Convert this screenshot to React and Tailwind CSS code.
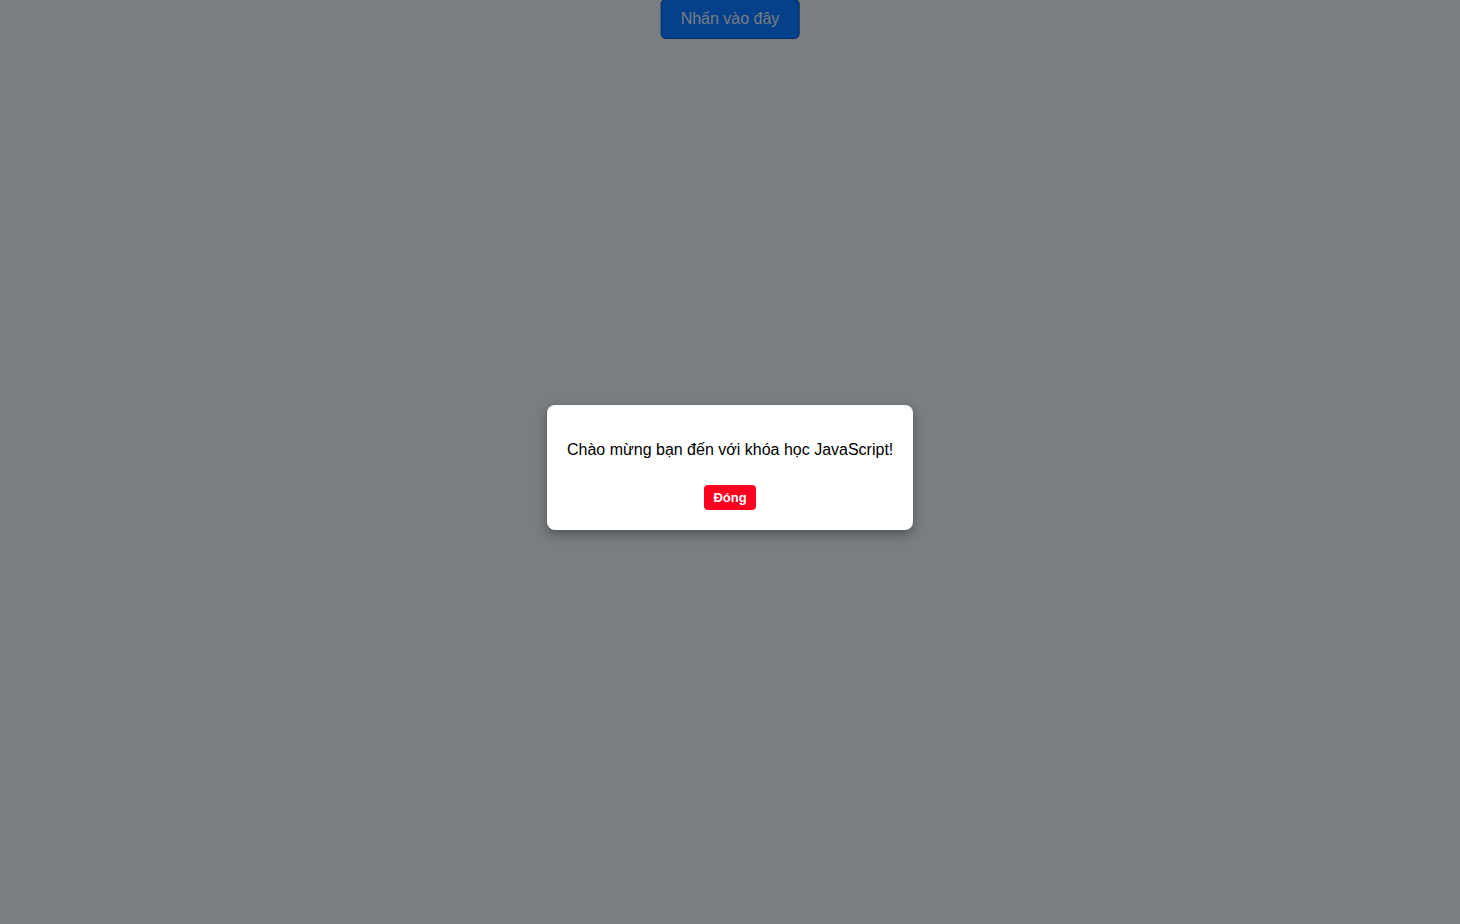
export default function App() {
    return (
        <div className="min-h-screen bg-white text-center font-['Liberation_Sans',Arial,sans-serif]">
            <button
                type="button"
                className="px-[19px] h-[39px] text-[16px] leading-[18px] text-white bg-[#007bff] border border-[#0056c8] rounded-[5px]"
            >
                Nhấn vào đây
            </button>

            <div className="fixed inset-0 bg-[#7a7e81] flex items-center justify-center pt-[11px]">
                <button
                    type="button"
                    className="absolute -top-px left-1/2 -translate-x-1/2 px-[19px] h-[40px] text-[16px] leading-[18px] text-[#7a7e82] bg-[#04418a] border border-[#012a60] rounded-[5px]"
                >
                    Nhấn vào đây
                </button>
                <div className="relative bg-white rounded-[8px] p-[20px] w-[366px] h-[125px] shadow-[0_4px_12px_rgba(0,0,0,0.35)]">
                    <p className="my-[16px] text-[16px] leading-[18px] text-black whitespace-nowrap">
                        Chào mừng bạn đến với khóa học JavaScript!
                    </p>
                    <button
                        type="button"
                        className="mt-[10px] h-[25px] px-[9px] bg-[#ff0022] text-white text-[13px] font-bold rounded-[4px]"
                    >
                        Đóng
                    </button>
                </div>
            </div>
        </div>
    )
}
